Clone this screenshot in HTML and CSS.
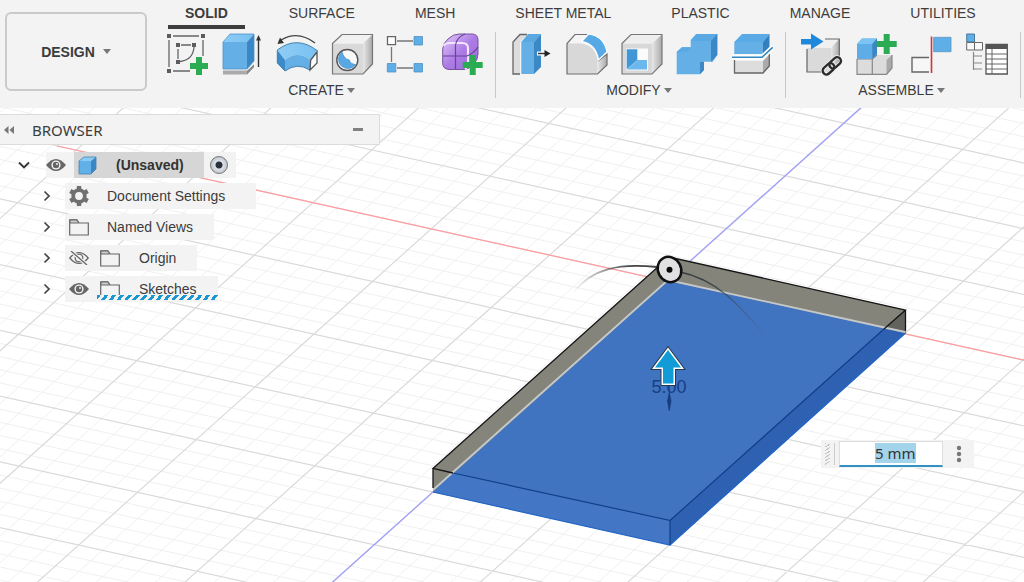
FILE: index.html
```html
<!DOCTYPE html>
<html lang="en">
<head>
<meta charset="utf-8">
<title>Design workspace</title>
<link rel="stylesheet" href="styles.css">
</head>
<body>
<svg width="0" height="0" class="defs" aria-hidden="true">
  <defs>
    <linearGradient id="top" x1="0" y1="0" x2="1" y2="0"><stop offset="0" stop-color="#8ecdf5"/><stop offset="1" stop-color="#79c1f2"/></linearGradient>
    <linearGradient id="side" x1="0" y1="0" x2="1" y2="0"><stop offset="0" stop-color="#e8e8e8"/><stop offset="1" stop-color="#a9a9a9"/></linearGradient>
    <linearGradient id="violet" x1="0" y1="0" x2="1" y2="1"><stop offset="0" stop-color="#e3ccfa"/><stop offset=".5" stop-color="#ad7de6"/><stop offset="1" stop-color="#9a66d8"/></linearGradient>
    <symbol id="eye" viewBox="0 0 20 14"><path d="M0 7Q10-5 20 7Q10 19 0 7Z" fill="#666"/><circle cx="10" cy="7" r="4.6" fill="#f3f3f3"/><circle cx="10" cy="7" r="3.2" fill="#666"/><circle cx="11" cy="6" r="1" fill="#eee"/></symbol>
    <symbol id="folder" viewBox="0 0 20 17"><path d="M.7 16V.8H8L10 4H19.3V16Z" fill="#f3f3f3" stroke="#666" stroke-width="1.2"/><path d="M1 1H8L9.500 4H1Z" fill="#ccc" stroke="#666"/></symbol>
    <symbol id="chev" viewBox="0 0 8 12"><path d="M1.500 1.500L6 6L1.500 10.500" fill="none" stroke="#444" stroke-width="1.700"/></symbol>
  </defs>
</svg>

<header class="toolbar">
  <button class="workspace" type="button">DESIGN <span class="caret"></span></button>
  <div class="ribbon">
    <nav class="tabs">
      <a class="tab active" href="#solid">SOLID</a>
      <a class="tab" href="#surface">SURFACE</a>
      <a class="tab" href="#mesh">MESH</a>
      <a class="tab" href="#sheet">SHEET METAL</a>
      <a class="tab" href="#plastic">PLASTIC</a>
      <a class="tab" href="#manage">MANAGE</a>
      <a class="tab" href="#utilities">UTILITIES</a>
    </nav>
    <div class="groups">
      <section class="group">
        <div class="tools">
          <button type="button" class="tool" aria-label="Create sketch"><svg viewBox="0 0 44 44"><path d="M8 4H34M4 8V35M8 39H25M38 8V24M16 13H26M13 17V27M29 15Q28 28 15 29.500" fill="none" stroke="#666" stroke-width="1.300"/><path d="M2 2h4v4h-4zM36 2h4v4h-4zM2 37h4v4h-4zM11 11h4v4h-4zM27 11h4v4h-4zM11 28h4v4h-4z" fill="#5c5c5c"/><path d="M31 25h6v6h6v6h-6v6h-6v-6h-6v-6h6z" fill="#2bab52"/></svg></button>
          <button type="button" class="tool" aria-label="Extrude"><svg viewBox="0 0 44 44"><path d="M3 38H27L34 31V35L27 42.500H3Z" fill="#aaa"/><path d="M27 38L34 31V35L27 42.500Z" fill="#888"/><path d="M2 37.500H27L35 30" fill="none" stroke="#f3f3f3" stroke-width="2"/><path d="M3 10H27V37H3Z" fill="#64afe6"/><path d="M3 10L10 2H34L27 10Z" fill="url(#top)"/><path d="M27 10L34 2V29L27 37Z" fill="#3b86c4"/><path d="M3 10L10 2H34V29L27 37H3Z" fill="none" stroke="#4b93cb" stroke-width=".8"/><path d="M38.500 6V35" stroke="#333" stroke-width="1.400"/><path d="M36 8.500L38.500 3L41 8.500Z" fill="#333"/></svg></button>
          <button type="button" class="tool" aria-label="Revolve"><svg viewBox="0 0 44 44"><path d="M2.300 18Q22 3 42.300 18.700L35.700 28Q22 18 10 28Z" fill="url(#top)"/><path d="M2.300 18L10 28V39L2.300 31Z" fill="#3c8aca"/><path d="M10 28Q22 18 35.700 28L35 38Q22 30 10 39Z" fill="#64afe6"/><path d="M2.300 18Q22 3 42.300 18.700M2.300 18V31L10 39Q22 30 35 38" fill="none" stroke="#407fae"/><path d="M35.700 28L42 20V31L35 38Z" fill="#fff" stroke="#555" stroke-width="1.300"/><path d="M40 11Q23-2 6 8" fill="none" stroke="#444" stroke-width="1.400"/><path d="M2.500 12L5 5.500L9 11Z" fill="#333"/></svg></button>
          <button type="button" class="tool" aria-label="Hole"><svg viewBox="0 0 44 44"><path d="M2.500 11.500H33V42H2.500Z" fill="#d9d9d9"/><path d="M2.500 11.500L12 2.500H42.500L33 11.500Z" fill="#f1f1f1"/><path d="M33 11.500L42.500 2.500V32L33 42Z" fill="url(#side)"/><path d="M2.500 11.500L12 2.500H42.500V32L33 42H2.500Z" fill="none" stroke="#777" stroke-width="1.200"/><circle cx="17.300" cy="28" r="10.500" fill="#f8f8f8" stroke="#555" stroke-width="1.400"/><path d="M12 20A9.300 9.300 0 1 0 25.500 32.500Q20 32 19.500 28Q14 27 12 20Z" fill="#58a9e3" stroke="#3c84bb" stroke-width=".6"/></svg></button>
          <button type="button" class="tool" aria-label="Rectangular pattern"><svg viewBox="0 0 44 44"><path d="M12 9H28M12 36H28M6.500 15V30" stroke="#777" stroke-width="1.300"/><path d="M2.500 4.700h8v8h-8z" fill="#fff" stroke="#666" stroke-width="1.300"/><path d="M29 4.500h8.500v8.500H29zM2.300 31.500h8.500V40H2.300zM29 31.500h8.500V40H29z" fill="#5eaee8" stroke="#5090bd" stroke-width=".8"/></svg></button>
          <button type="button" class="tool" aria-label="Create form"><svg viewBox="0 0 44 44"><path d="M2.700 17Q3 11 8 7Q13 2 19 2H32Q38 2 38 8V22Q38 28 33 33Q29 37 24 37.500H9Q2.700 37 2.700 31Z" fill="url(#violet)" stroke="#76549a"/><path d="M3.500 14Q5 11 10 11H22Q28 11 28 16V30Q28 35 25 37" fill="none" stroke="#f2e3ff" stroke-width="2.200"/><path d="M3 24H27Q34 21 38 15M15.500 37V13Q17 5 25 2" fill="none" stroke="#694395" stroke-width="1.200"/><path d="M29.700 23h6v7h7v6h-7v7h-6v-7h-7v-6h7z" fill="#2bab52"/></svg></button>
        </div>
        <button class="group-name" type="button">CREATE <span class="caret"></span></button>
      </section>
      <section class="group">
        <div class="tools">
          <button type="button" class="tool" aria-label="Press pull"><svg viewBox="0 0 44 44"><path d="M3 10L10 2.500H17L10 10V42H3Z" fill="#ddd"/><path d="M17 2.500H10L3 10V42H10" fill="none" stroke="#666" stroke-width="1.300"/><path d="M11.300 10H24V42H11.300Z" fill="#64afe6"/><path d="M11.300 10L18 2H31L24 10Z" fill="#5aa8e2"/><path d="M24 10L31 2V35L24 42Z" fill="#3c88c6"/><path d="M27 21.500H37" stroke="#fff" stroke-width="4"/><path d="M28 21.500H36" stroke="#333" stroke-width="1.500"/><path d="M34.500 18L40.500 21.500L34.500 25Z" fill="#222"/></svg></button>
          <button type="button" class="tool" aria-label="Fillet"><svg viewBox="0 0 44 44"><path d="M2 11.500L10 2.500H24L17 11Z" fill="#f4f4f4"/><path d="M2 11.500H15Q31 13 32.500 29V42H2Z" fill="#d8d8d8"/><path d="M32.500 29L42 22V33L32.500 42Z" fill="url(#side)"/><path d="M23 2.500H10L2 11.500V42H32.500L42 33V22L33 29" fill="none" stroke="#707070" stroke-width="1.200"/><path d="M16.700 9.700L23.500 2Q39 4 42 20L33.500 28Q31 12 16.700 9.700Z" fill="#56a9e4" stroke="#fff" stroke-width="1.200"/></svg></button>
          <button type="button" class="tool" aria-label="Shell"><svg viewBox="0 0 44 44"><path d="M2 11.500H32V42H2Z" fill="#d8d8d8"/><path d="M2 11.500L11 2.500H42L32 11.500Z" fill="#eee"/><path d="M32 11.500L42 2.500V32L32 42Z" fill="url(#side)"/><path d="M2 11.500L11 2.500H42V32L32 42H2Z" fill="none" stroke="#777" stroke-width="1.200"/><path d="M6 16.500H28V38.500H6Z" fill="#fbfbfb"/><path d="M6.700 17.300H17.300V28L6.700 37.300Z" fill="#4197d6"/><path d="M17.300 28H27V37.500H6.700Z" fill="#6cb8ee"/></svg></button>
          <button type="button" class="tool" aria-label="Combine"><svg viewBox="0 0 44 44"><path d="M1.700 20L7 15.300H15.700V8L21 2H42.300V23L37.700 29.700H29V38L25 42.300H1.700Z" fill="#64afe6"/><path d="M15.700 9L22 2H42.300L36 9ZM1.700 20L7 15.300H15.700L13 20Z" fill="#59a9e5"/><path d="M36 9L42.300 2V23L36 29.700ZM25 30H29V38L25 42.300Z" fill="#3c88c6"/></svg></button>
          <button type="button" class="tool" aria-label="Split body"><svg viewBox="0 0 44 44"><path d="M4.300 10H33V22H4.300Z" fill="#64afe6"/><path d="M4.300 10L12 2H39.500L33 10Z" fill="#5aaae5"/><path d="M33 10L39.500 2V15L33 22Z" fill="#347fbd"/><path d="M4.500 29H33V41H4.500Z" fill="#ddd"/><path d="M33 29L39.300 22.500V34L33 41Z" fill="#aaa"/><path d="M4.500 28V41H33L39.300 34V22" fill="none" stroke="#666" stroke-width="1.300"/><path d="M2 25.300H32L42.700 15.300" fill="none" stroke="#fff" stroke-width="5"/><path d="M2 25.300H32L42.700 15.300" fill="none" stroke="#3186bf" stroke-width="1.600"/></svg></button>
        </div>
        <button class="group-name" type="button">MODIFY <span class="caret"></span></button>
      </section>
      <section class="group">
        <div class="tools">
          <button type="button" class="tool" aria-label="Insert component"><svg viewBox="0 0 44 44"><path d="M7 16L16 7H39.300L31 16Z" fill="#f0f0f0"/><path d="M7 16H31V40H7Z" fill="#dadada"/><path d="M31 16L39.300 7V31L31 40Z" fill="url(#side)"/><path d="M25 7H39.300V30M7 17V40H23" fill="none" stroke="#666" stroke-width="1.200"/><path d="M1 7H11V1.500L23.500 9.500L11 17.500V12.500H1Z" fill="#1e88dc"/><g transform="rotate(-42 32 34)" fill="none" stroke="#f3f3f3" stroke-width="4"><rect x="21" y="30" width="13" height="7.500" rx="3.700"/><rect x="30" y="30" width="13" height="7.500" rx="3.700"/></g><g transform="rotate(-42 32 34)" fill="none" stroke="#2d2d2d" stroke-width="2.400"><rect x="21" y="30" width="13" height="7.500" rx="3.700"/><rect x="30" y="30" width="13" height="7.500" rx="3.700"/></g></svg></button>
          <button type="button" class="tool" aria-label="New component"><svg viewBox="0 0 44 44"><path d="M17.300 27L22 23H37V36L31.500 42.300H2V27Z" fill="#dcdcdc"/><path d="M31.500 28L37 23V36L31.500 42.300Z" fill="#aaa"/><path d="M2 27V42.300H31.500L37 36V23M17.300 27V42.300M2 27H17.300L22 23" fill="none" stroke="#888" stroke-width="1.200"/><path d="M2 12L7 6.500H22V22L17.300 27H2Z" fill="#5eade6"/><path d="M2 12L7 6.500H22L17.300 12Z" fill="#7cc4f3"/><path d="M17.300 12L22 6.500V22L17.300 27Z" fill="#3b87c5"/><path d="M28.700 2h6v7h7v6h-7v7h-6v-7h-7V9h7z" fill="#2bab52"/></svg></button>
          <button type="button" class="tool" aria-label="Joint"><svg viewBox="0 0 44 44"><path d="M19 25.500H2V40H19" fill="#f7f7f7" stroke="#666" stroke-width="1.400"/><path d="M21.500 4.500V41" stroke="#d92f3d" stroke-width="1.600"/><path d="M23.700 5.300H41V19.700H23.700Z" fill="#5eaee8" stroke="#5795bf" stroke-width=".8"/></svg></button>
          <button type="button" class="tool" aria-label="Bill of materials"><svg viewBox="0 0 44 44"><path d="M1.700 2H9.500V10H1.700Z" fill="#5eaee8" stroke="#4b7999"/><path d="M1.700 10.500H9.500V18H1.700ZM9.500 10.500H17.500V18H9.500Z" fill="#fafafa" stroke="#666"/><path d="M8.500 20V38M8.500 24H17M8.500 31H17M8.500 37H17" fill="none" stroke="#888" stroke-width="1.200"/><path d="M21 12.500H42.300V42H21Z" fill="#fff" stroke="#555" stroke-width="1.300"/><path d="M21 12.500H42.300V17H21Z" fill="#555"/><path d="M21 22H42M21 27H42M21 32H42M21 37H42M27 17V42" stroke="#666"/></svg></button>
        </div>
        <button class="group-name" type="button">ASSEMBLE <span class="caret"></span></button>
      </section>
    </div>
  </div>
</header>

<main class="stage">
  <svg class="scene" viewBox="0 108 1024 474" preserveAspectRatio="xMidYMid slice">
    <defs>
      <linearGradient id="fadeL" gradientUnits="userSpaceOnUse" x1="573" y1="0" x2="630" y2="0"><stop offset="0" stop-color="#555" stop-opacity="0"/><stop offset="1" stop-color="#444"/></linearGradient>
      <linearGradient id="fadeR" gradientUnits="userSpaceOnUse" x1="705" y1="0" x2="768" y2="0"><stop offset="0" stop-color="#333d42"/><stop offset="1" stop-color="#456" stop-opacity="0"/></linearGradient>
    </defs>
    <g id="grid"></g>
    <path class="axis-x" d="M57 146L1100 377"/>
    <path class="axis-y" d="M894 78L277 632"/>
    <path d="M433 468.500L669 257L905.500 310V333L670 545L433 492Z" fill="#85847b"/>
    <path d="M884 329L905.500 310V333Z" fill="#63635d"/>
    <path d="M433 492L668 281L905.500 333L670 545Z" fill="#4174c0"/>
    <path d="M433 492L453 473L670 520.500V545Z" fill="#4377c5"/>
    <path d="M670 520.500L884 329L905.500 333L670 545Z" fill="#2e61b2"/>
    <path d="M433 492L670 545L905.500 333" fill="none" stroke="#2467c8" stroke-width="1.200"/>
    <path d="M453 473L670 520.500V545M670 520.500L884 329" fill="none" stroke="#123f88" stroke-width="1.200"/>
    <path d="M433 490L668 280L905 332" fill="none" stroke="#c5c9ca" stroke-width="1.800"/>
    <path d="M453 473L433 468.500L669 257L905.500 310L884 329M433 468.500V488M905.500 310V331" fill="none" stroke="#161616" stroke-width="1.300"/>
    <path d="M573 293C592 268 620 263 657 267" fill="none" stroke="url(#fadeL)" stroke-width="1.800"/>
    <path d="M680 272C715 279 738 303 765 336" fill="none" stroke="url(#fadeR)" stroke-width="1.600"/>
    <ellipse cx="669.500" cy="269.500" rx="11.500" ry="13" transform="rotate(-28 669.500 269.500)" fill="#e1e1e3" stroke="#111" stroke-width="2.500"/>
    <circle cx="669.500" cy="269.700" r="3" fill="#080808"/>
    <text class="dimension" x="669" y="393" text-anchor="middle">5.00</text>
    <path d="M669.300 384V411M667.500 401L669.300 393L671 401L669.300 410Z" fill="#163d80" stroke="#163d80" stroke-width=".8"/>
    <path d="M668 350L681 367.500H673.500V383.500H663V367.500H655Z" fill="#119bd7" stroke="#24394a" stroke-width="5"/>
    <path d="M668 350L681 367.500H673.500V383.500H663V367.500H655Z" fill="#119bd7" stroke="#fff" stroke-width="3"/>
    <path d="M668 350L681 367.500H673.500V383.500H663V367.500H655Z" fill="#119bd7"/>
  </svg>

  <aside class="browser">
    <div class="browser-head">
      <button class="collapse" type="button" aria-label="Collapse"><svg width="10" height="8" viewBox="0 0 10 8"><path d="M4.500 0V8L0 4ZM10 0V8L5.500 4Z" fill="#777"/></svg></button>
      <span class="browser-title">BROWSER</span>
      <button class="minimize" type="button" aria-label="Minimize"></button>
    </div>
    <ul class="tree">
      <li class="row root">
        <svg class="chev-down" viewBox="0 0 12 8"><path d="M1 1.500L6 6.500L11 1.500" fill="none" stroke="#333" stroke-width="1.800"/></svg>
        <div class="root-item">
          <svg class="eye"><use href="#eye"/></svg>
          <span class="root-name"><svg class="cube" viewBox="0 0 19 19"><path d="M1 5H13V18H3Q1 18 1 16Z" fill="#62b0e8"/><path d="M1 5L6 1H18L13 5Z" fill="#8accf5"/><path d="M13 5L18 1V13L13 18Z" fill="#3b87c5"/><path d="M1 5L6 1H18V13L13 18H1Z" fill="none" stroke="#4681ad" stroke-width=".8"/></svg><b>(Unsaved)</b></span>
          <input class="activate" type="radio" name="component" checked aria-label="Activate component">
        </div>
      </li>
      <li class="row"><svg class="chev"><use href="#chev"/></svg><div class="item wide"><svg class="gear" viewBox="0 0 20 20"><circle cx="10" cy="10" r="5.800" fill="none" stroke="#707070" stroke-width="3.800"/><path d="M10 0V4M10 16V20M1.300 5L4.800 7M15.200 13L18.700 15M1.300 15L4.800 13M15.200 7L18.700 5" stroke="#707070" stroke-width="4.400"/></svg><span>Document Settings</span></div></li>
      <li class="row"><svg class="chev"><use href="#chev"/></svg><div class="item"><svg class="folder"><use href="#folder"/></svg><span>Named Views</span></div></li>
      <li class="row"><svg class="chev"><use href="#chev"/></svg><div class="item nested"><svg class="eye" viewBox="0 0 20 14"><path d="M.8 7Q10-4 19.200 7Q10 18 .8 7Z" fill="none" stroke="#666" stroke-width="1.200"/><circle cx="10" cy="7" r="3.800" fill="none" stroke="#666" stroke-width="1.300"/><path d="M2 0L18 14" stroke="#f3f3f3" stroke-width="3.500"/><path d="M2 0L18 14" stroke="#666" stroke-width="1.300"/></svg><svg class="folder"><use href="#folder"/></svg><span>Origin</span></div></li>
      <li class="row"><svg class="chev"><use href="#chev"/></svg><div class="item nested marked"><svg class="eye"><use href="#eye"/></svg><svg class="folder"><use href="#folder"/></svg><span>Sketches</span></div></li>
    </ul>
  </aside>

  <form class="value-box">
    <span class="grip"></span>
    <input id="distance" class="distance" type="text" value="5 mm" aria-label="Distance">
    <button class="more" type="button" aria-label="More options"><svg width="6" height="18" viewBox="0 0 6 18"><circle cx="3" cy="3" r="2.200" fill="#777"/><circle cx="3" cy="9" r="2.200" fill="#777"/><circle cx="3" cy="15" r="2.200" fill="#777"/></svg></button>
  </form>
</main>
<script src="script.js"></script>
</body>
</html>
```

FILE: styles.css
```css
* { box-sizing: border-box; }
body {
  margin: 0;
  height: 100vh;
  display: flex;
  flex-direction: column;
  overflow: hidden;
  background: #fff;
  color: #3c3c3c;
  font: 14px/16px "Liberation Sans", Arial, sans-serif;
}
button { border: 0; padding: 0; background: none; color: inherit; font: inherit; }
.defs { position: absolute; }

.toolbar {
  display: flex;
  gap: 18px;
  padding: 0 0 10px 5px;
  background: #f3f3f3;
}
.workspace {
  flex: none;
  width: 142px;
  height: 79px;
  margin-top: 12px;
  display: flex;
  align-items: center;
  justify-content: center;
  gap: 8px;
  border: 2px solid #cacaca;
  border-radius: 6px;
  font-weight: bold;
}
.caret {
  display: inline-block;
  border: 4px solid transparent;
  border-top: 5px solid #777;
  border-bottom: 0;
}
.ribbon { flex: 1; }
.tabs { display: flex; gap: 28px; padding-left: 3px; }
.tab {
  padding: 5px 16px 4px;
  border-bottom: 4px solid transparent;
  color: #3c3c3c;
  text-decoration: none;
  white-space: nowrap;
}
.tab.active { padding: 5px 17px 4px; font-weight: bold; border-color: #3d3d3d; }
.groups { display: flex; padding-top: 3px; }
.group {
  display: flex;
  flex-direction: column;
  align-items: center;
  gap: 6px;
  padding: 0 11px 0 14px;
  border-right: 1px solid #c8c8c8;
}
.group:first-child { padding-left: 0; }
.tools { display: flex; gap: 11px; }
.tool { width: 44px; height: 44px; }
.tool svg { display: block; width: 44px; height: 44px; }
.group-name { display: flex; align-items: center; gap: 3px; padding-right: 6px; }

.stage { position: relative; flex: 1; min-height: 0; }
.scene { position: absolute; width: 100%; height: 100%; }
.minor { stroke: #f0f0f0; stroke-width: 1; }
.major { stroke: #dadada; stroke-width: 1.200; }
.axis-x { stroke: #ff9c9f; stroke-width: 1.200; }
.axis-y { stroke: #a0a0f8; stroke-width: 1.300; }
.dimension { font-size: 18px; fill: #183f85; }

.browser { position: relative; width: 380px; padding-top: 6px; }
.browser-head {
  display: flex;
  align-items: center;
  height: 31px;
  padding: 0 16px 0 4px;
  background: #f3f3f3;
  border: solid #dcdcdc;
  border-width: 1px 1px 1px 0;
}
.collapse { width: 28px; height: 16px; display: flex; align-items: center; }
.browser-title { flex: 1; font: 15px/20px "Noto Sans", sans-serif; }
.minimize { width: 10px; height: 3px; background: #808080; }
.tree {
  display: flex;
  flex-direction: column;
  gap: 5px;
  margin: 0;
  padding: 7px 0 0;
  list-style: none;
}
.row { display: flex; align-items: center; height: 26px; padding-left: 43px; }
.row.root { padding-left: 18px; }
.chev-down { width: 12px; height: 8px; margin-right: 16px; }
.root-item { display: flex; align-items: center; height: 26px; background: #f3f3f3; }
.root-name {
  display: flex;
  align-items: center;
  gap: 19px;
  height: 26px;
  margin: 0 6px 0 8px;
  padding: 0 20px 0 4px;
  background: #d6d6d6;
  color: #333;
}
.cube { width: 19px; height: 19px; }
.activate {
  appearance: none;
  width: 18px;
  height: 18px;
  margin: 0 8px 0 0;
  border: 1px solid #777;
  border-radius: 50%;
  background: radial-gradient(circle, #2b303b 0 3px, #dfe3ea 4px, #c3c7d0 8px);
}
.chev { width: 8px; height: 12px; margin-right: 14px; }
.item {
  display: flex;
  align-items: center;
  height: 26px;
  padding: 0 21px 0 4px;
  gap: 18px;
  background: #f3f3f3;
}
.item.wide { padding-right: 31px; }
.item.nested { gap: 11px; }
.item.nested span { padding-left: 8px; }
.eye { width: 20px; height: 14px; }
.folder { width: 20px; height: 17px; }
.gear { width: 20px; height: 20px; }
.marked { position: relative; }
.marked::after {
  content: "";
  position: absolute;
  left: 32px;
  right: 0;
  bottom: 2px;
  height: 5px;
  background: repeating-linear-gradient(130deg, #1d95d0 0 3px, #f3f3f3 3px 6px);
}

.value-box {
  position: absolute;
  left: 80.200%;
  top: 70%;
  display: flex;
  align-items: center;
  height: 28px;
  background: #f3f3f3;
}
.grip {
  width: 10px;
  height: 22px;
  margin: 0 4px 0 4px;
  border-right: 1px solid #ccc;
  background: repeating-linear-gradient(150deg, #c4c4c4 0 1px, #f3f3f3 1px 3px) 0 0 / 5px 100% no-repeat;
}
.distance {
  width: 104px;
  height: 26px;
  padding: 0 0 0 8px;
  border: 1px solid #ddd;
  border-bottom: 2px solid #3291c0;
  outline: 0;
  background: #fff;
  color: #333;
  font: 15px/20px "Noto Sans", sans-serif;
  text-align: center;
}
.distance::selection { background: #a4d4eb; color: #333; }
.more { width: 31px; height: 28px; display: flex; align-items: center; justify-content: center; }
```

FILE: script.js
```js
// Ground-plane grid: one major cell spans vectors U and V from the origin.
const O = [668, 281.3], U = [118.35, 26.25], V = [58.75, -52.7];
const at = (i, j) => (O[0] + i * U[0] + j * V[0]).toFixed(1) + " " + (O[1] + i * U[1] + j * V[1]).toFixed(1);
let minor = "", major = "";
for (let n = -60; n <= 60; n++) {
  const k = n / 5;
  const seg = "M" + at(k, -14) + "L" + at(k, 14) + "M" + at(-14, k) + "L" + at(14, k);
  if (n % 5) minor += seg; else major += seg;
}
document.getElementById("grid").innerHTML =
  '<path class="minor" d="' + minor + '"/><path class="major" d="' + major + '"/>';
const field = document.getElementById("distance");
field.focus();
field.select();
```
